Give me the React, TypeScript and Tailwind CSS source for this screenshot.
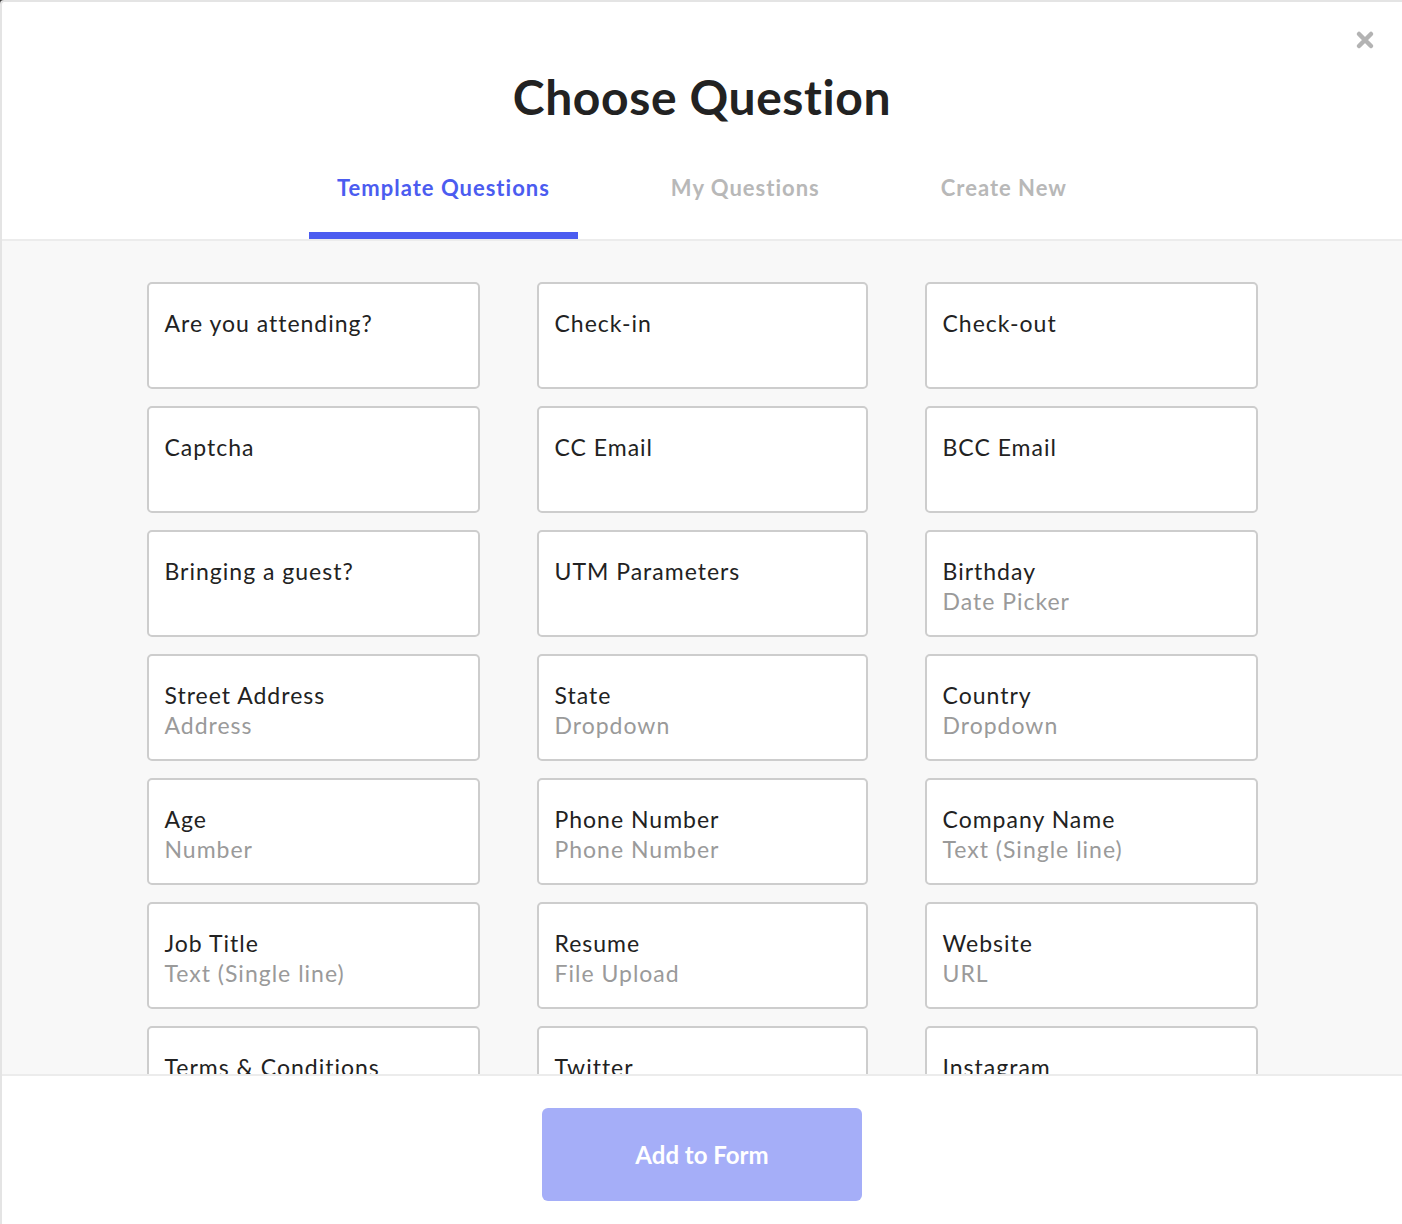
import React from "react";

type Q = { title: string; sub?: string };

const questions: Q[] = [
  { title: "Are you attending?" },
  { title: "Check-in" },
  { title: "Check-out" },
  { title: "Captcha" },
  { title: "CC Email" },
  { title: "BCC Email" },
  { title: "Bringing a guest?" },
  { title: "UTM Parameters" },
  { title: "Birthday", sub: "Date Picker" },
  { title: "Street Address", sub: "Address" },
  { title: "State", sub: "Dropdown" },
  { title: "Country", sub: "Dropdown" },
  { title: "Age", sub: "Number" },
  { title: "Phone Number", sub: "Phone Number" },
  { title: "Company Name", sub: "Text (Single line)" },
  { title: "Job Title", sub: "Text (Single line)" },
  { title: "Resume", sub: "File Upload" },
  { title: "Website", sub: "URL" },
  { title: "Terms & Conditions", sub: "Checkbox" },
  { title: "Twitter", sub: "URL" },
  { title: "Instagram", sub: "URL" },
  { title: "Facebook", sub: "URL" },
  { title: "LinkedIn", sub: "URL" },
  { title: "Gender", sub: "Dropdown" },
];

export default function App() {
  return (
    <div
      className="w-[1402px] h-[1224px] bg-[#3a3a3a] overflow-hidden"
      style={{ fontFamily: "Lato, 'Open Sans', sans-serif" }}
    >
      <div className="relative w-full h-full bg-white border-l-2 border-t-2 border-[#e4e4e4] rounded-tl-[4px] flex flex-col">
        <button className="absolute top-[27px] right-[26px] w-[22px] h-[22px] flex items-center justify-center">
          <svg width="20" height="20" viewBox="0 0 20 20">
            <path d="M4 4 L16 16 M16 4 L4 16" stroke="#b3b3b3" strokeWidth="4.5" strokeLinecap="round" />
          </svg>
        </button>

        <div className="shrink-0 border-b-2 border-[#ececec] flex flex-col items-center">
          <h1 className="pt-[66px] text-[48px] leading-[58px] font-bold text-[#222222] tracking-[0.6px]">
            Choose Question
          </h1>
          <div className="flex gap-[65px]">
            <div className="px-[28px] pt-[47px] pb-[29px] border-b-[7px] border-[#4b5cf0] text-[22px] leading-[30px] font-bold tracking-[1px] text-[#4b5cf0]">
              Template Questions
            </div>
            <div className="px-[28px] pt-[47px] pb-[29px] border-b-[7px] border-transparent text-[22px] leading-[30px] font-bold tracking-[1px] text-[#b8b8b8]">
              My Questions
            </div>
            <div className="px-[28px] pt-[47px] pb-[29px] border-b-[7px] border-transparent text-[22px] leading-[30px] font-bold tracking-[1px] text-[#b8b8b8]">
              Create New
            </div>
          </div>
        </div>

        <div className="shrink-0 bg-[#f8f8f8] h-[833px] overflow-hidden pt-[41px]">
          <div className="w-[1111px] mx-auto grid grid-cols-[333px_331px_333px] gap-x-[57px] gap-y-[17px]">
            {questions.map((q) => (
              <div
                key={q.title}
                className="h-[107px] bg-white border-2 border-[#cdcdcd] rounded-[5px] pl-[16px] pt-[24px]"
              >
                <div className="text-[23px] leading-[30px] text-[#222222] tracking-[1px]">{q.title}</div>
                {q.sub && (
                  <div className="text-[23px] leading-[30px] text-[#9a9a9a] tracking-[1px]">{q.sub}</div>
                )}
              </div>
            ))}
          </div>
        </div>

        <div className="flex-1 border-t-2 border-[#ececec] flex justify-center items-start pt-[32px]">
          <button className="w-[320px] h-[93px] rounded-[6px] bg-[#a5aef8] text-white text-[24px] font-bold">
            Add to Form
          </button>
        </div>
      </div>
    </div>
  );
}
